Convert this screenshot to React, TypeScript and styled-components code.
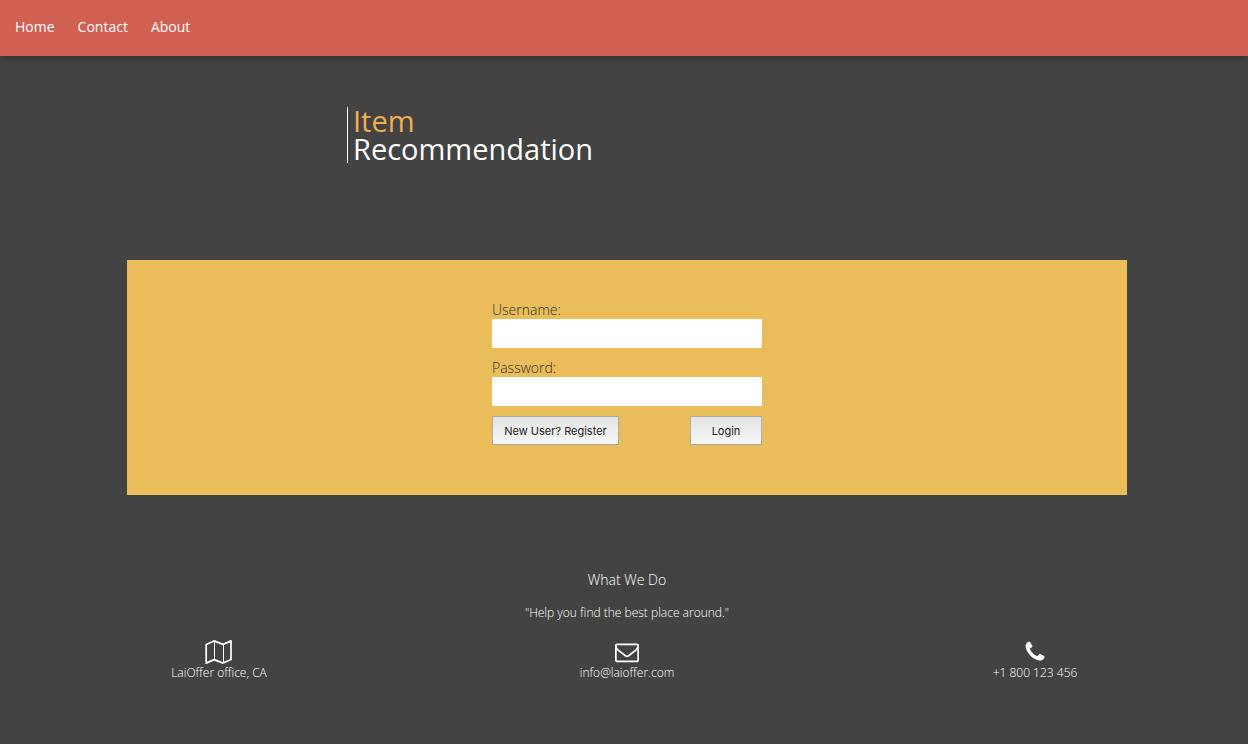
import React from "react";
import styled, { createGlobalStyle } from "styled-components";

const GlobalStyle = createGlobalStyle`
  * { box-sizing: border-box; }
  body {
    margin: 0;
    background: #434343;
    color: #fff;
    font-family: "Open Sans", sans-serif;
    font-size: 14px;
    line-height: 20px;
  }
`;

const NavBar = styled.nav`
  display: flex;
  gap: 23px;
  padding: 17px 15px 19px;
  background: #d06051;
  box-shadow: 0 2px 8px rgba(0, 0, 0, 0.25);
`;

const NavLink = styled.a`
  color: #fff;
  text-decoration: none;
`;

const Page = styled.div`
  padding: 51px 9px 0 15px;
`;

const Title = styled.h1`
  width: 560px;
  max-width: 100%;
  margin: 0 auto;
  padding-left: 5px;
  border-left: 1px solid #fff;
  font-size: 29px;
  font-weight: 400;
  line-height: 28px;
`;

const TitleAccent = styled.span`
  display: block;
  color: #f1ae50;
`;

const Panel = styled.main`
  max-width: 1000px;
  margin: 97px auto 75px;
  padding: 40px 20px 50px;
  background: #eabc5a;
`;

const LoginForm = styled.form`
  max-width: 270px;
  margin: 0 auto;
`;

const Field = styled.div`
  display: flex;
  flex-direction: column;
  margin-bottom: 10px;
`;

const Label = styled.label`
  color: #333;
  font-weight: 300;
  line-height: 19px;
`;

const Input = styled.input`
  width: 100%;
  height: 29px;
  padding: 0 8px;
  border: 0;
  background: #fff;
  font: inherit;
`;

const Actions = styled.div`
  display: flex;
  justify-content: space-between;
`;

const Button = styled.button<{ $width: number }>`
  width: ${(p) => p.$width}px;
  height: 29px;
  padding: 0;
  border: 1px solid #acacac;
  background: linear-gradient(#e4e4e4, #f7f7f7);
  color: #222;
  font-family: Inter, sans-serif;
  font-size: 11px;
`;

const Footer = styled.footer`
  text-align: center;
  font-size: 12px;
  font-weight: 300;
`;

const FooterTitle = styled.h2`
  margin: 0 0 13px;
  font-size: 14px;
  font-weight: 300;
  line-height: 20px;
`;

const Motto = styled.p`
  margin: 0 0 17px;
`;

const Contacts = styled.div`
  display: grid;
  grid-template-columns: repeat(3, 1fr);
`;

const Contact = styled.div`
  display: flex;
  flex-direction: column;
  align-items: center;
  line-height: 18px;
`;

const Icon = styled.svg`
  height: 24px;
  fill: #fff;
`;

const MapIcon = () => (
  <Icon width="28" viewBox="0 0 28 24" aria-hidden="true">
    <path
      d="M1.2 4.6 9 .9 18.1 4.4 26 .9V19.4L18.1 23.1 9 19.6 1.2 23.1Z"
      fill="none"
      stroke="#fff"
      strokeWidth="1.7"
      strokeLinejoin="round"
    />
    <path d="M9.5 1V19.6M18.5 4.4V23" stroke="#fff" strokeWidth="1" />
  </Icon>
);

const EnvelopeIcon = () => (
  <Icon width="24" viewBox="0 0 1792 1792" aria-hidden="true">
    <path d="M1664 1504v-768q-32 36-69 66-268 206-426 338-51 43-83 67t-86.5 48.5-102.5 24.5h-2q-48 0-102.5-24.5t-86.5-48.5-83-67q-158-132-426-338-37-30-69-66v768q0 13 9.5 22.5t22.5 9.5h1472q13 0 22.5-9.5t9.5-22.5zm0-1051v-24.5l-.5-13-3-12.5-5.5-9-9-7.5-14-2.5h-1472q-13 0-22.5 9.5t-9.5 22.5q0 168 147 284 193 152 401 317 6 5 35 29.5t46 37.5 44.5 31.5 50.5 27.5 43 9h2q20 0 43-9t50.5-27.5 44.5-31.5 46-37.5 35-29.5q208-165 401-317 54-43 100.5-115.5t46.5-131.5zm128-37v1088q0 66-47 113t-113 47h-1472q-66 0-113-47t-47-113v-1088q0-66 47-113t113-47h1472q66 0 113 47t47 113z" />
  </Icon>
);

const PhoneIcon = () => (
  <Icon width="24" viewBox="0 0 1792 1792" aria-hidden="true">
    <path d="M1600 1240q0 27-10 70.5t-21 68.5q-21 50-122 106-94 51-186 51-27 0-52.5-3.5t-57.5-12.5-47.5-14.5-55.5-20.5-49-18q-98-35-175-83-128-79-264.5-215.5t-215.5-264.5q-48-77-83-175-3-9-18-49t-20.5-55.5-14.5-47.5-12.5-57.5-3.5-52.5q0-92 51-186 56-101 106-122 25-11 68.5-21t70.5-10q14 0 21 3 18 6 53 76 11 19 30 54t35 63.5 31 53.5q3 4 17.5 25t21.5 35.5 7 28.5q0 20-28.5 50t-62 55-62 53-28.5 46q0 9 5 22.5t8.5 20.5 14 24 11.5 19q76 137 174 235t235 174q2 1 19 11.5t24 14 20.5 8.5 22.5 5q18 0 46-28.5t53-62 55-62 50-28.5q14 0 28.5 7t35.5 21.5 25 17.5q25 15 53.5 31t63.5 35 54 30q70 35 76 53 3 7 3 21z" />
  </Icon>
);

export default function App() {
  return (
    <>
      <GlobalStyle />
      <NavBar>
        <NavLink href="#home">Home</NavLink>
        <NavLink href="#contact">Contact</NavLink>
        <NavLink href="#about">About</NavLink>
      </NavBar>
      <Page>
        <Title>
          <TitleAccent>Item</TitleAccent>
          Recommendation
        </Title>
        <Panel>
          <LoginForm>
            <Field>
              <Label htmlFor="username">Username:</Label>
              <Input id="username" type="text" />
            </Field>
            <Field>
              <Label htmlFor="password">Password:</Label>
              <Input id="password" type="password" />
            </Field>
            <Actions>
              <Button type="button" $width={127}>New User? Register</Button>
              <Button type="submit" $width={72}>Login</Button>
            </Actions>
          </LoginForm>
        </Panel>
        <Footer>
          <FooterTitle>What We Do</FooterTitle>
          <Motto>"Help you find the best place around."</Motto>
          <Contacts>
            <Contact>
              <MapIcon />
              LaiOffer office, CA
            </Contact>
            <Contact>
              <EnvelopeIcon />
              info@laioffer.com
            </Contact>
            <Contact>
              <PhoneIcon />
              +1 800 123 456
            </Contact>
          </Contacts>
        </Footer>
      </Page>
    </>
  );
}
